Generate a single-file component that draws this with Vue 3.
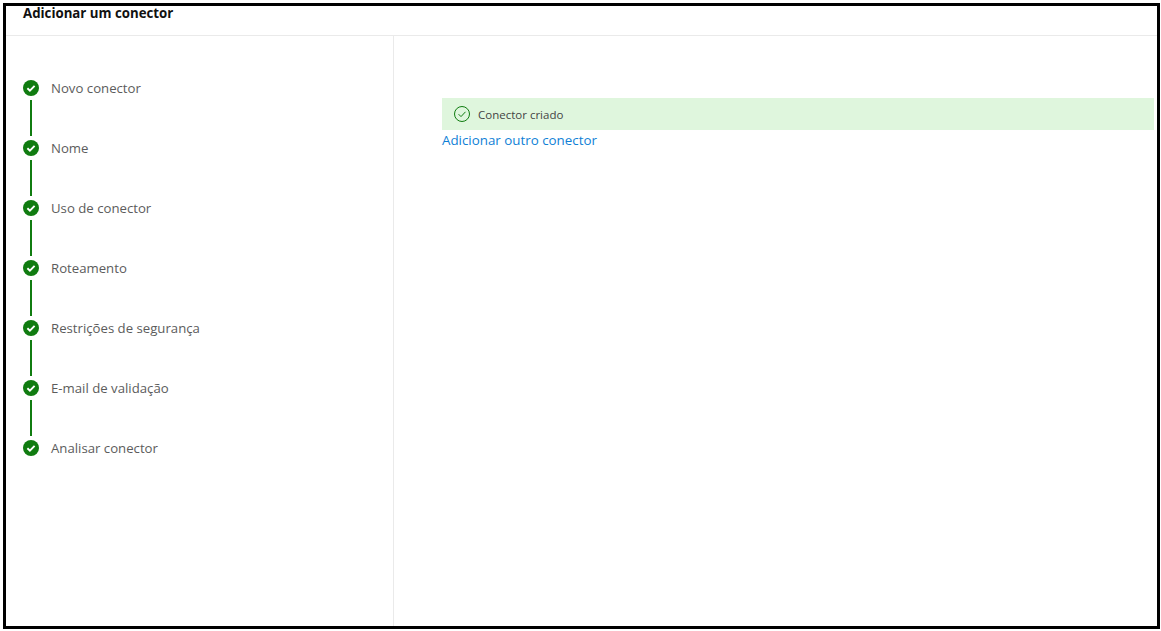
<script setup>
const steps = ['Novo conector','Nome','Uso de conector','Roteamento','Restrições de segurança','E-mail de validação','Analisar conector']
</script>

<template>
  <div class="frame">
    <header class="head"><h1 class="title">Adicionar um conector</h1></header>
    <div class="body">
      <nav class="rail">
        <div v-for="(s, i) in steps" :key="s" class="step">
          <div class="marker">
            <svg class="dot" width="16" height="16" viewBox="0 0 16 16">
              <circle cx="8" cy="8" r="8" fill="#107c10"/>
              <path d="M4.4 8.3 L6.9 10.7 L11.6 5.9" fill="none" stroke="#fff" stroke-width="1.9"/>
            </svg>
            <span v-if="i < steps.length - 1" class="line"></span>
          </div>
          <span class="label">{{ s }}</span>
        </div>
      </nav>
      <main class="content">
        <div class="banner">
          <svg width="16" height="16" viewBox="0 0 16 16">
            <circle cx="8" cy="8" r="7.5" fill="none" stroke="#107c10" stroke-width="1"/>
            <path d="M4.6 8.2 L7 10.6 L11.5 5.8" fill="none" stroke="#107c10" stroke-width="1"/>
          </svg>
          <span class="msg">Conector criado</span>
        </div>
        <a class="link" href="#" @click.prevent>Adicionar outro conector</a>
      </main>
    </div>
  </div>
</template>

<style scoped>
.frame {
  box-sizing: border-box;
  width: 1157px;
  height: 626px;
  margin: 3px 0 0 3px;
  border: 3px solid #000;
  background: #fff;
  display: flex;
  flex-direction: column;
  font-family: "Open Sans", "Noto Sans", sans-serif;
  overflow: hidden;
}
.head {
  box-sizing: border-box;
  height: 30px;
  flex: none;
  padding-left: 17px;
  border-bottom: 1px solid #eaeaea;
}
.title {
  margin: 0;
  font-size: 13.25px;
  font-weight: 700;
  line-height: 14px;
  color: #111;
}
.body { flex: 1; display: flex; min-height: 0; }
.rail {
  box-sizing: border-box;
  width: 388px;
  flex: none;
  border-right: 1px solid #eaeaea;
  padding: 44px 0 0 17px;
}
.step { display: flex; height: 60px; }
.marker { width: 16px; display: flex; flex-direction: column; align-items: center; }
.dot { display: block; flex: none; }
.line { width: 2px; height: 36px; margin-top: 4px; background: #107c10; }
.label {
  margin-left: 12px;
  font-size: 13.2px;
  line-height: 16px;
  color: #5c5c5c;
}
.content { flex: 1; padding: 62px 3px 0 48px; }
.banner {
  height: 32px;
  display: flex;
  align-items: center;
  padding-left: 12px;
  background: #dff6dd;
}
.msg { margin-left: 8px; font-size: 11.5px; color: #444; }
.link {
  display: block;
  font-size: 13.35px;
  line-height: 20px;
  color: #0f7fd6;
  text-decoration: none;
}
</style>
